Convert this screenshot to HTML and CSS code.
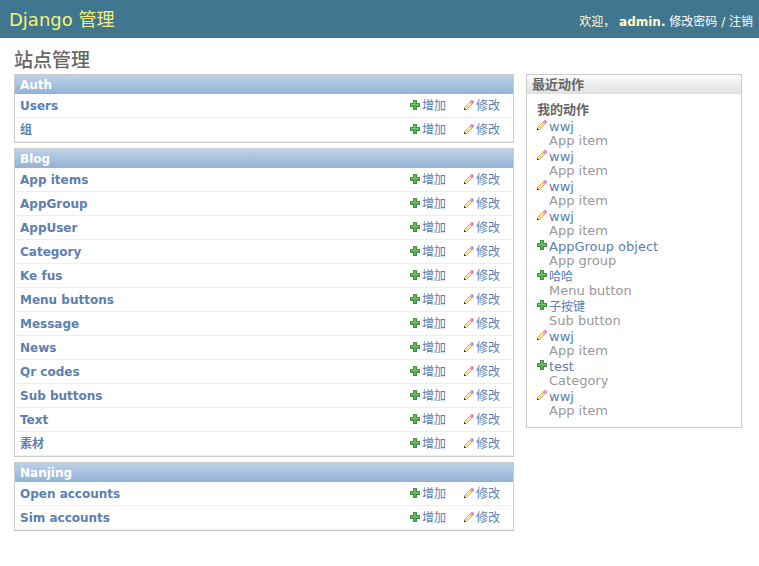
FILE: index.html
```html
<!DOCTYPE html>
<html lang="zh-CN">
<head>
<meta charset="utf-8">
<title>站点管理</title>
<link rel="stylesheet" href="styles.css">
</head>
<body>
<svg class="defs" aria-hidden="true">
  <symbol id="add" viewBox="0 0 10 10">
    <path fill="#3f943c" d="M3 0h4v3h3v4h-3v3h-4v-3h-3v-4h3z"/>
    <path fill="#55b052" d="M4 1h2v3h3v2h-3v3h-2v-3h-3v-2h3z"/>
    <path fill="#74c470" d="M4 1h1v3h4v1h-8v-1h3z"/>
  </symbol>
  <symbol id="edit" viewBox="0 0 10 10">
    <path fill="#d9b374" d="M5 2h1v1h1v1h1v1h-1v1h-1v1h-1v1h-1v1h-1v1h-3v-3h1v-1h1v-1h1v-1h1v-1h1z"/>
    <path fill="#ffe27a" d="M5 3h1v1h1v1h-1v1h-1v1h-1v1h-1v-1h-1v-1h1v-1h1v-1h1z"/>
    <path fill="#ffefad" d="M5 3h1v1h-1v1h-1v1h-1v1h-1v-1h1v-1h1v-1h1zM1 7h1v1h1v1h-2z"/>
    <path fill="#3b2418" d="M0 9h1v1h-1z"/>
    <path fill="#8a5c3c" d="M0 8h1v1h1v1h-1v-1h-1z"/>
    <path fill="#ed82ce" d="M7 0h2v1h1v2h-1v1h-1v-1h-1v-1h-1v-1h1z"/>
    <path fill="#f29bd9" d="M7 1h1v1h-1z"/>
    <path fill="#e2c3b6" d="M6 2h1v1h1v1h-1v-1h-1z"/>
  </symbol>
</svg>

<header class="header">
  <h1 class="brand">Django 管理</h1>
  <div class="user-tools">欢迎， <strong>admin.</strong> <a href="#">修改密码</a> / <a href="#">注销</a></div>
</header>

<div class="content">
  <h1 class="title">站点管理</h1>
  <div class="columns">
    <main class="main">
      <div class="module">
        <table>
          <caption><a href="#">Auth</a></caption>
          <tbody>
            <tr><th scope="row"><a href="#">Users</a></th><td><a href="#"><svg class="icon"><use href="#add"/></svg>增加</a></td><td><a href="#"><svg class="icon"><use href="#edit"/></svg>修改</a></td></tr>
            <tr><th scope="row"><a href="#">组</a></th><td><a href="#"><svg class="icon"><use href="#add"/></svg>增加</a></td><td><a href="#"><svg class="icon"><use href="#edit"/></svg>修改</a></td></tr>
          </tbody>
        </table>
      </div>
      <div class="module">
        <table>
          <caption><a href="#">Blog</a></caption>
          <tbody>
            <tr><th scope="row"><a href="#">App items</a></th><td><a href="#"><svg class="icon"><use href="#add"/></svg>增加</a></td><td><a href="#"><svg class="icon"><use href="#edit"/></svg>修改</a></td></tr>
            <tr><th scope="row"><a href="#">AppGroup</a></th><td><a href="#"><svg class="icon"><use href="#add"/></svg>增加</a></td><td><a href="#"><svg class="icon"><use href="#edit"/></svg>修改</a></td></tr>
            <tr><th scope="row"><a href="#">AppUser</a></th><td><a href="#"><svg class="icon"><use href="#add"/></svg>增加</a></td><td><a href="#"><svg class="icon"><use href="#edit"/></svg>修改</a></td></tr>
            <tr><th scope="row"><a href="#">Category</a></th><td><a href="#"><svg class="icon"><use href="#add"/></svg>增加</a></td><td><a href="#"><svg class="icon"><use href="#edit"/></svg>修改</a></td></tr>
            <tr><th scope="row"><a href="#">Ke fus</a></th><td><a href="#"><svg class="icon"><use href="#add"/></svg>增加</a></td><td><a href="#"><svg class="icon"><use href="#edit"/></svg>修改</a></td></tr>
            <tr><th scope="row"><a href="#">Menu buttons</a></th><td><a href="#"><svg class="icon"><use href="#add"/></svg>增加</a></td><td><a href="#"><svg class="icon"><use href="#edit"/></svg>修改</a></td></tr>
            <tr><th scope="row"><a href="#">Message</a></th><td><a href="#"><svg class="icon"><use href="#add"/></svg>增加</a></td><td><a href="#"><svg class="icon"><use href="#edit"/></svg>修改</a></td></tr>
            <tr><th scope="row"><a href="#">News</a></th><td><a href="#"><svg class="icon"><use href="#add"/></svg>增加</a></td><td><a href="#"><svg class="icon"><use href="#edit"/></svg>修改</a></td></tr>
            <tr><th scope="row"><a href="#">Qr codes</a></th><td><a href="#"><svg class="icon"><use href="#add"/></svg>增加</a></td><td><a href="#"><svg class="icon"><use href="#edit"/></svg>修改</a></td></tr>
            <tr><th scope="row"><a href="#">Sub buttons</a></th><td><a href="#"><svg class="icon"><use href="#add"/></svg>增加</a></td><td><a href="#"><svg class="icon"><use href="#edit"/></svg>修改</a></td></tr>
            <tr><th scope="row"><a href="#">Text</a></th><td><a href="#"><svg class="icon"><use href="#add"/></svg>增加</a></td><td><a href="#"><svg class="icon"><use href="#edit"/></svg>修改</a></td></tr>
            <tr><th scope="row"><a href="#">素材</a></th><td><a href="#"><svg class="icon"><use href="#add"/></svg>增加</a></td><td><a href="#"><svg class="icon"><use href="#edit"/></svg>修改</a></td></tr>
          </tbody>
        </table>
      </div>
      <div class="module">
        <table>
          <caption><a href="#">Nanjing</a></caption>
          <tbody>
            <tr><th scope="row"><a href="#">Open accounts</a></th><td><a href="#"><svg class="icon"><use href="#add"/></svg>增加</a></td><td><a href="#"><svg class="icon"><use href="#edit"/></svg>修改</a></td></tr>
            <tr><th scope="row"><a href="#">Sim accounts</a></th><td><a href="#"><svg class="icon"><use href="#add"/></svg>增加</a></td><td><a href="#"><svg class="icon"><use href="#edit"/></svg>修改</a></td></tr>
          </tbody>
        </table>
      </div>
    </main>

    <aside class="recent">
      <h2>最近动作</h2>
      <h3>我的动作</h3>
      <ul>
        <li><svg class="icon"><use href="#edit"/></svg><div><a href="#">wwj</a><span>App item</span></div></li>
        <li><svg class="icon"><use href="#edit"/></svg><div><a href="#">wwj</a><span>App item</span></div></li>
        <li><svg class="icon"><use href="#edit"/></svg><div><a href="#">wwj</a><span>App item</span></div></li>
        <li><svg class="icon"><use href="#edit"/></svg><div><a href="#">wwj</a><span>App item</span></div></li>
        <li><svg class="icon"><use href="#add"/></svg><div><a href="#">AppGroup object</a><span>App group</span></div></li>
        <li><svg class="icon"><use href="#add"/></svg><div><a class="cjk" href="#">哈哈</a><span>Menu button</span></div></li>
        <li><svg class="icon"><use href="#add"/></svg><div><a class="cjk" href="#">子按键</a><span>Sub button</span></div></li>
        <li><svg class="icon"><use href="#edit"/></svg><div><a href="#">wwj</a><span>App item</span></div></li>
        <li><svg class="icon"><use href="#add"/></svg><div><a href="#">test</a><span>Category</span></div></li>
        <li><svg class="icon"><use href="#edit"/></svg><div><a href="#">wwj</a><span>App item</span></div></li>
      </ul>
    </aside>
  </div>
</div>
</body>
</html>
```
FILE: styles.css
```css
* { box-sizing: border-box; }

body {
  margin: 0;
  background: #fff;
  color: #333;
  font: 12px/15px "DejaVu Sans", "Noto Sans CJK SC", sans-serif;
}

a { color: #5b80b2; text-decoration: none; }
h1, h2, h3, ul { margin: 0; padding: 0; }

.defs { display: none; }

.icon {
  flex: none;
  width: 10px;
  height: 10px;
  shape-rendering: crispEdges;
}

.header {
  display: flex;
  align-items: center;
  justify-content: space-between;
  height: 38px;
  padding: 0 6px 0 9px;
  background: #417690;
  color: #ffc;
}

.brand {
  color: #f4f379;
  font-size: 18px;
  font-weight: normal;
}

.user-tools { padding-top: 6px; }
.user-tools a { color: #fff; }

.content { padding: 12px 17px 16px 14px; }

.title {
  color: #666;
  font-size: 19px;
  font-weight: 500;
  line-height: 20px;
  margin-bottom: 4px;
}

.columns {
  display: flex;
  align-items: flex-start;
  gap: 12px;
}

.main {
  flex: 1;
  display: flex;
  flex-direction: column;
  gap: 5px;
}

.module { border: 1px solid #ccc; }

table {
  width: 100%;
  border-spacing: 0;
}

caption {
  height: 19px;
  padding: 0 5px;
  background: linear-gradient(#bdd2e8, #94b2d5);
  font-weight: bold;
  line-height: 20px;
  text-align: left;
}

caption a { color: #fff; }

th, td {
  height: 24px;
  padding: 2px 0 0;
  border-bottom: 1px solid #eee;
  text-align: left;
}

th { padding-left: 5px; }
td { width: 54px; }
td:last-child { width: 49px; }

td a {
  display: flex;
  align-items: baseline;
  gap: 2px;
}

.recent {
  flex: none;
  width: 216px;
  padding-bottom: 8px;
  border: 1px solid #ccc;
  color: #666;
}

.recent h2 {
  padding: 0 5px;
  background: linear-gradient(#fcfcfc, #e0e0e0);
  font-size: 13px;
  line-height: 19px;
}

.recent h3 {
  padding: 8px 10px 0;
  font-size: 13px;
  line-height: 16px;
}

.recent ul {
  padding: 1px 10px 0;
  list-style: none;
}

.recent li {
  display: flex;
  gap: 2px;
  font-size: 13px;
}

.recent .icon { margin-top: 1px; }
.recent li a, .recent li span { display: block; }

.recent .cjk {
  padding-top: 2px;
  font-size: 12px;
  line-height: 13px;
}

.recent span {
  padding-bottom: 2px;
  color: #999;
  line-height: 13px;
}
```
